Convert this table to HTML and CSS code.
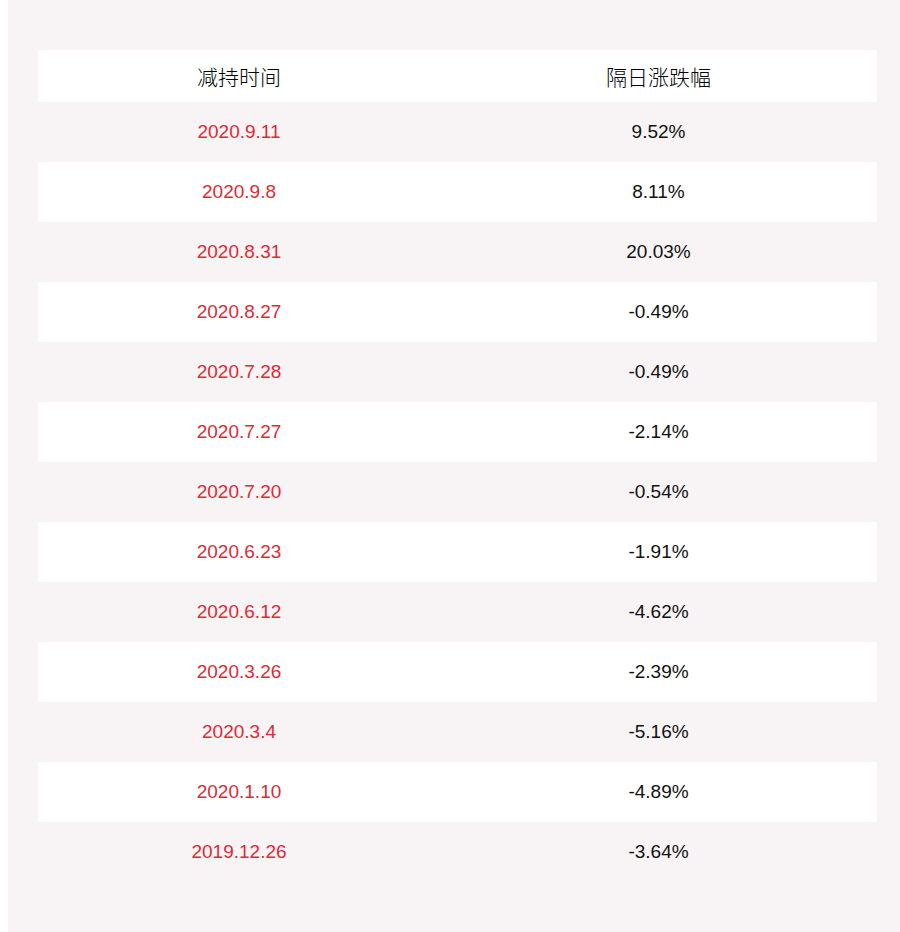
FILE: index.html
```html
<!DOCTYPE html>
<html lang="zh">
<head>
<meta charset="utf-8">
<link rel="stylesheet" href="styles.css">
</head>
<body>
<div class="panel">
  <div class="table">
    <div class="row head"><div class="cell">减持时间</div><div class="cell">隔日涨跌幅</div></div>
    <div class="row"><div class="cell date">2020.9.11</div><div class="cell">9.52%</div></div>
    <div class="row alt"><div class="cell date">2020.9.8</div><div class="cell">8.11%</div></div>
    <div class="row"><div class="cell date">2020.8.31</div><div class="cell">20.03%</div></div>
    <div class="row alt"><div class="cell date">2020.8.27</div><div class="cell">-0.49%</div></div>
    <div class="row"><div class="cell date">2020.7.28</div><div class="cell">-0.49%</div></div>
    <div class="row alt"><div class="cell date">2020.7.27</div><div class="cell">-2.14%</div></div>
    <div class="row"><div class="cell date">2020.7.20</div><div class="cell">-0.54%</div></div>
    <div class="row alt"><div class="cell date">2020.6.23</div><div class="cell">-1.91%</div></div>
    <div class="row"><div class="cell date">2020.6.12</div><div class="cell">-4.62%</div></div>
    <div class="row alt"><div class="cell date">2020.3.26</div><div class="cell">-2.39%</div></div>
    <div class="row"><div class="cell date">2020.3.4</div><div class="cell">-5.16%</div></div>
    <div class="row alt"><div class="cell date">2020.1.10</div><div class="cell">-4.89%</div></div>
    <div class="row"><div class="cell date">2019.12.26</div><div class="cell">-3.64%</div></div>
  </div>
</div>
</body>
</html>
```
FILE: styles.css
```css
html, body {
  margin: 0;
  padding: 0;
  background: #ffffff;
  overflow: hidden;
}
body {
  padding-left: 8px;
  font-family: "Liberation Sans", Arial, "Noto Sans CJK SC", sans-serif;
}
.panel {
  width: 892px;
  background: #f8f4f5;
  padding: 50px 0 50px 30px;
  box-sizing: border-box;
}
.table {
  width: 839px;
  display: flex;
  flex-direction: column;
}
.row {
  display: grid;
  grid-template-columns: 402px 1fr;
  height: 60px;
  align-items: center;
  font-size: 19px;
  color: #111111;
}
.row.head {
  height: 52px;
  background: #ffffff;
  font-size: 21px;
  font-weight: 300;
  font-family: "Noto Sans CJK SC", sans-serif;
  color: #000000;
}
.row.alt {
  background: #ffffff;
}
.cell {
  text-align: center;
}
.date {
  color: #dc2b35;
}
```
